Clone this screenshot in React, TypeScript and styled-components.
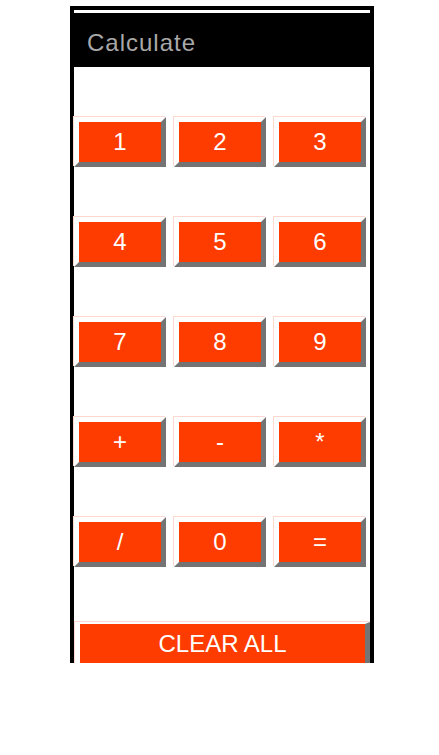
import React from "react";
import styled, { createGlobalStyle } from "styled-components";

const GlobalStyle = createGlobalStyle`
  html, body {
    margin: 0;
    padding: 0;
    background: #ffffff;
  }
  body {
    font-family: "Liberation Sans", Arial, sans-serif;
  }
`;

const Frame = styled.div`
  box-sizing: border-box;
  width: 304px;
  height: 657px;
  margin: 6px 0 0 70px;
  border: 4px solid #000;
  padding-top: 3px;
  background: #fff;
`;

const Header = styled.div`
  box-sizing: border-box;
  height: 54px;
  background: #000;
  color: #a8a8a8;
  font-size: 24px;
  letter-spacing: 1px;
  padding: 6px 0 0 13px;
  display: flex;
  align-items: center;
`;

const Keypad = styled.div`
  display: grid;
  grid-template-columns: repeat(3, 92px);
  column-gap: 8px;
  row-gap: 50px;
  padding-top: 50px;
`;

const Key = styled.button`
  box-sizing: border-box;
  height: 50px;
  margin: 0;
  padding: 0;
  border-width: 5px;
  border-style: solid;
  border-color: #ffffff #747474 #747474 #ffffff;
  box-shadow: -1px -1px 0 #ffd9cf;
  background: #ff3c00;
  color: #fff;
  font-family: "Liberation Sans", Arial, sans-serif;
  font-size: 24px;
  line-height: 1;
  display: flex;
  align-items: center;
  justify-content: center;
`;

const ClearKey = styled(Key)`
  width: 295px;
  height: 46px;
  margin: 55px 0 0 1px;
  border-top-width: 2px;
`;

const keys = ["1", "2", "3", "4", "5", "6", "7", "8", "9", "+", "-", "*", "/", "0", "="];

export default function App() {
  return (
    <>
      <GlobalStyle />
      <Frame>
        <Header>Calculate</Header>
        <Keypad>
          {keys.map((k) => (
            <Key key={k}>{k}</Key>
          ))}
        </Keypad>
        <ClearKey>CLEAR ALL</ClearKey>
      </Frame>
    </>
  );
}
